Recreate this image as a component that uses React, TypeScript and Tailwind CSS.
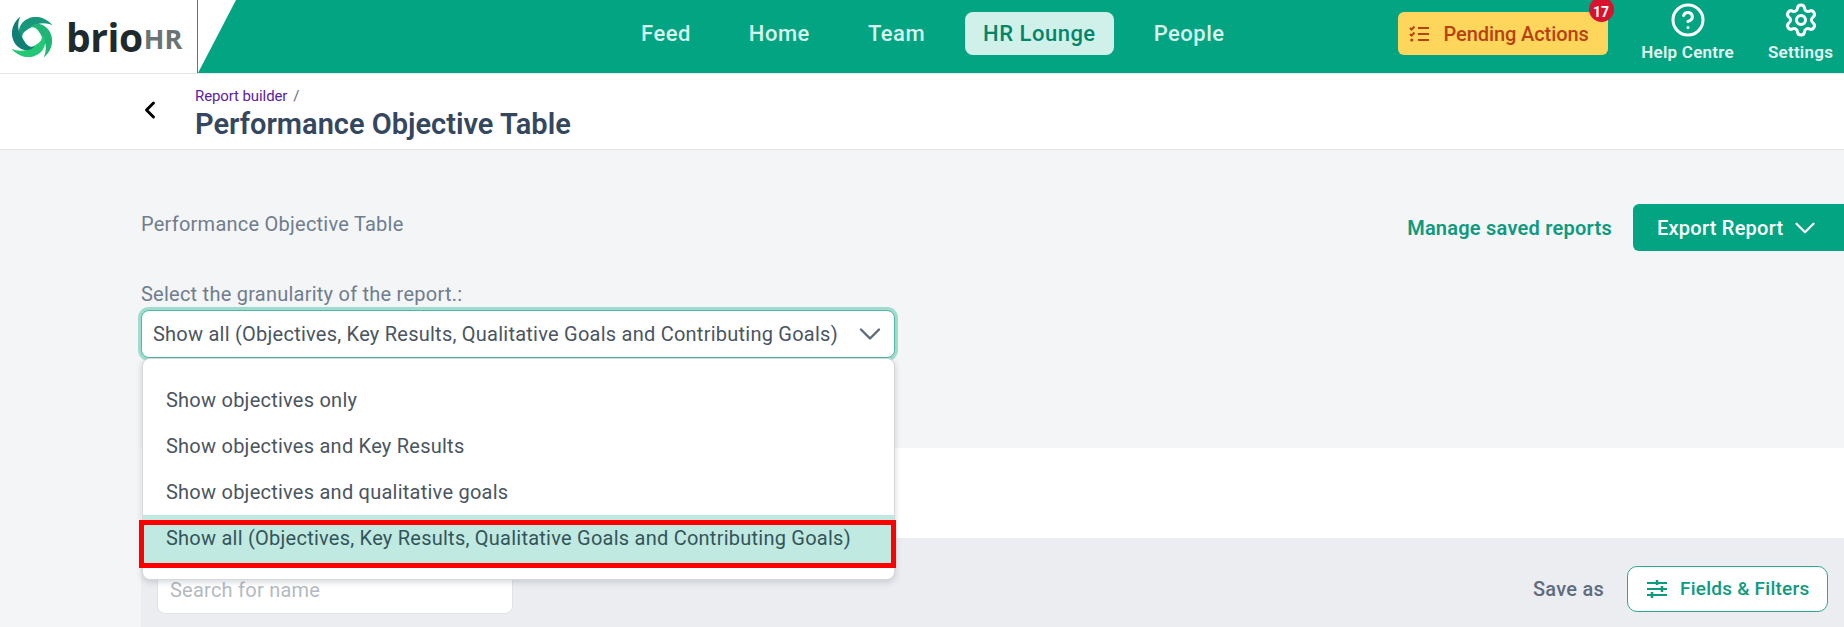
import React from 'react';
import { ChevronDown, ChevronLeft, CircleHelp, Settings } from 'lucide-react';

const navItems = ['Feed', 'Home', 'Team', 'HR Lounge', 'People'];

const options = [
  'Show objectives only',
  'Show objectives and Key Results',
  'Show objectives and qualitative goals',
];

const allGoals = 'Show all (Objectives, Key Results, Qualitative Goals and Contributing Goals)';

// one swirl blade: radius grows with the angle, blade is widest past the middle
const blade = (() => {
  const outer: string[] = [];
  const inner: string[] = [];
  for (let i = 0; i <= 24; i++) {
    const t = i / 24;
    const angle = ((-200 + t * 170) * Math.PI) / 180;
    const ro = 7 + 16.5 * Math.pow(t, 0.6);
    const ri = ro - 9.5 * Math.sin(Math.PI * Math.pow(t, 1.3));
    outer.push(`${(ro * Math.cos(angle)).toFixed(2)} ${(ro * Math.sin(angle)).toFixed(2)}`);
    inner.unshift(`${(ri * Math.cos(angle)).toFixed(2)} ${(ri * Math.sin(angle)).toFixed(2)}`);
  }
  return `M${outer.join('L')}L${inner.join('L')}Z`;
})();

const LogoMark = () => (
  <svg width="48" height="48" viewBox="-24 -24 48 48">
    <path d={blade} fill="#17987c" />
    <path d={blade} fill="#1fb574" transform="rotate(90)" />
    <path d={blade} fill="#22c876" transform="rotate(180)" />
    <path d={blade} fill="#0f7f74" transform="rotate(270)" />
  </svg>
);

const PendingIcon = () => (
  <svg width="22" height="18" viewBox="0 0 22 18" fill="none" stroke="#b8420f" strokeWidth="2">
    <path d="M1 3l1.6 1.6L5.5 1.5M1 9l1.6 1.6L5.5 7.5" />
    <circle cx="2.8" cy="15" r="1.6" fill="#b8420f" stroke="none" />
    <path d="M9 3h11M9 9h11M9 15h11" />
  </svg>
);

const SlidersIcon = () => (
  <svg width="22" height="20" viewBox="0 0 22 20" fill="none" stroke="#0e9a7e" strokeWidth="2">
    <path d="M1 4h20M1 10h20M1 16h20" />
    <path d="M11 1v5M16 7v6M6 13v6" strokeWidth="2.5" />
  </svg>
);

const App: React.FC = () => {
  return (
    <div className="h-[627px] w-[1844px] overflow-hidden bg-[#f4f5f7] font-['Roboto',sans-serif] text-[20px] tracking-[0.24px]">
      {/* top bar */}
      <header className="flex h-[74px] overflow-hidden border-b border-[#e2e4e6] bg-white">
        <div className="flex w-[198px] shrink-0 items-center border-r border-[#03a482] pl-[8px]">
          <LogoMark />
          <span className="ml-[10px] font-['Open_Sans',sans-serif] text-[39px] leading-none font-bold tracking-[-0.4px] text-[#1f2a2c]">brio</span>
          <span className="mt-[3px] ml-[1px] font-['Open_Sans',sans-serif] text-[27px] leading-none font-bold tracking-normal text-[#697473]">HR</span>
        </div>
        <div className="flex flex-1 items-center bg-[#03a482] pb-[6px] [clip-path:polygon(38px_0,100%_0,100%_100%,0_100%)]">
          <nav className="ml-[425px] flex items-center gap-[22px]">
            {navItems.map((item) => (
              <span
                key={item}
                className={
                  item === 'HR Lounge'
                    ? 'flex h-[43px] items-center rounded-[8px] bg-[#cff1ea] px-[18px] text-[22px] font-medium tracking-[0.5px] text-[#03856a]'
                    : 'flex h-[43px] items-center px-[18px] text-[22px] font-medium tracking-[0.5px] text-[#d6f3ec]'
                }
              >
                {item}
              </span>
            ))}
          </nav>
          <div className="relative ml-[155px] flex h-[43px] w-[210px] items-center rounded-[6px] bg-[#ffd65c] pl-[11px]">
            <PendingIcon />
            <span className="ml-[13px] font-medium tracking-[-0.1px] text-[#b8420f]">Pending Actions</span>
            <span className="absolute top-[-15px] right-[-6px] flex h-[25px] w-[25px] items-center justify-center rounded-full bg-[#d7132f] pt-[5px] text-[14px] font-bold tracking-normal text-white">17</span>
          </div>
          <div className="mt-[2px] ml-[33px] flex w-[94px] flex-col items-center self-start text-white">
            <CircleHelp size={36} strokeWidth={2} />
            <span className="mt-[4px] text-[17px] leading-[20px] font-semibold whitespace-nowrap text-[#e3f7f2]">Help Centre</span>
          </div>
          <div className="mt-[2px] ml-[33px] flex w-[66px] flex-col items-center self-start text-white">
            <Settings size={36} strokeWidth={2} />
            <span className="mt-[4px] text-[17px] leading-[20px] font-semibold text-[#e3f7f2]">Settings</span>
          </div>
        </div>
      </header>

      {/* page title */}
      <div className="flex h-[76px] items-start border-b border-[#e2e4e6] bg-white pt-[13px] pl-[136px]">
        <ChevronLeft size={28} strokeWidth={2.5} className="mt-[9px] text-black" />
        <div className="ml-[31px]">
          <div className="text-[15px] leading-[18px] tracking-[-0.1px]">
            <span className="text-[#5b21a6]">Report builder</span>
            <span className="ml-[6px] text-[#5f6b7a]">/</span>
          </div>
          <h1 className="mt-[2px] text-[29px] leading-[34px] font-semibold tracking-normal text-[#34475f]">Performance Objective Table</h1>
        </div>
      </div>

      <main className="pl-[141px]">
        <div className="flex h-[102px] items-start justify-between pt-[54px]">
          <span className="mt-[10px] leading-[20px] text-[#6f7d8e]">Performance Objective Table</span>
          <div className="flex items-center">
            <span className="font-semibold text-[#0e9a7e]">Manage saved reports</span>
            <button className="ml-[21px] flex h-[47px] w-[211px] items-center rounded-l-[6px] bg-[#03a482] pl-[24px] font-medium text-white">
              Export Report
              <ChevronDown size={34} strokeWidth={1.6} className="ml-[5px]" />
            </button>
          </div>
        </div>

        <div className="relative mt-[32px] w-[754px]">
          <div className="leading-[20px] text-[#6f7d8e]">Select the granularity of the report.:</div>
          <div className="mt-[6px] flex h-[48px] items-center justify-between rounded-[8px] border border-[#4fb9a3] bg-white pr-[6px] pl-[11px] text-[#4a5560] shadow-[0_0_0_3px_#9fdccf]">
            <span className="whitespace-nowrap">{allGoals}</span>
            <ChevronDown size={36} strokeWidth={1.6} className="text-[#5f6b7a]" />
          </div>

          <div className="absolute top-[74px] left-[1px] z-10 w-[753px] rounded-[8px] border border-[#d5d9de] bg-white pt-[18px] pb-[15px] shadow-[0_2px_6px_rgba(60,70,90,0.22)]">
            {options.map((option) => (
              <div key={option} className="flex h-[46px] items-center pl-[23px] text-[#4a5560]">
                {option}
              </div>
            ))}
            <div className="relative flex h-[49px] items-start bg-[#c0e9e1] pl-[23px] leading-[47px] whitespace-nowrap text-[#33555a]">
              {allGoals}
              <div className="pointer-events-none absolute top-[5px] right-[-2px] bottom-[-4px] left-[-4px] border-[5px] border-[#ff0000]" />
            </div>
          </div>
        </div>

        <div className="mt-[90px] h-[90px] bg-white" />
        <div className="flex h-[90px] items-start justify-between bg-[#ebedf0] pt-[28px] pr-[16px] pl-[16px]">
          <div className="flex h-[48px] w-[356px] items-center rounded-[8px] border border-[#dfe2e6] bg-white pl-[12px] text-[#b4bac2]">Search for name</div>
          <div className="flex items-center">
            <span className="font-medium text-[#5f6b7f]">Save as</span>
            <button className="ml-[23px] flex h-[46px] w-[201px] items-center rounded-[10px] border border-[#2ea88f] bg-white pl-[18px] font-medium text-[#0e9a7e]">
              <SlidersIcon />
              <span className="ml-[12px] text-[19px] whitespace-nowrap">Fields &amp; Filters</span>
            </button>
          </div>
        </div>
      </main>
    </div>
  );
};

export default App;
